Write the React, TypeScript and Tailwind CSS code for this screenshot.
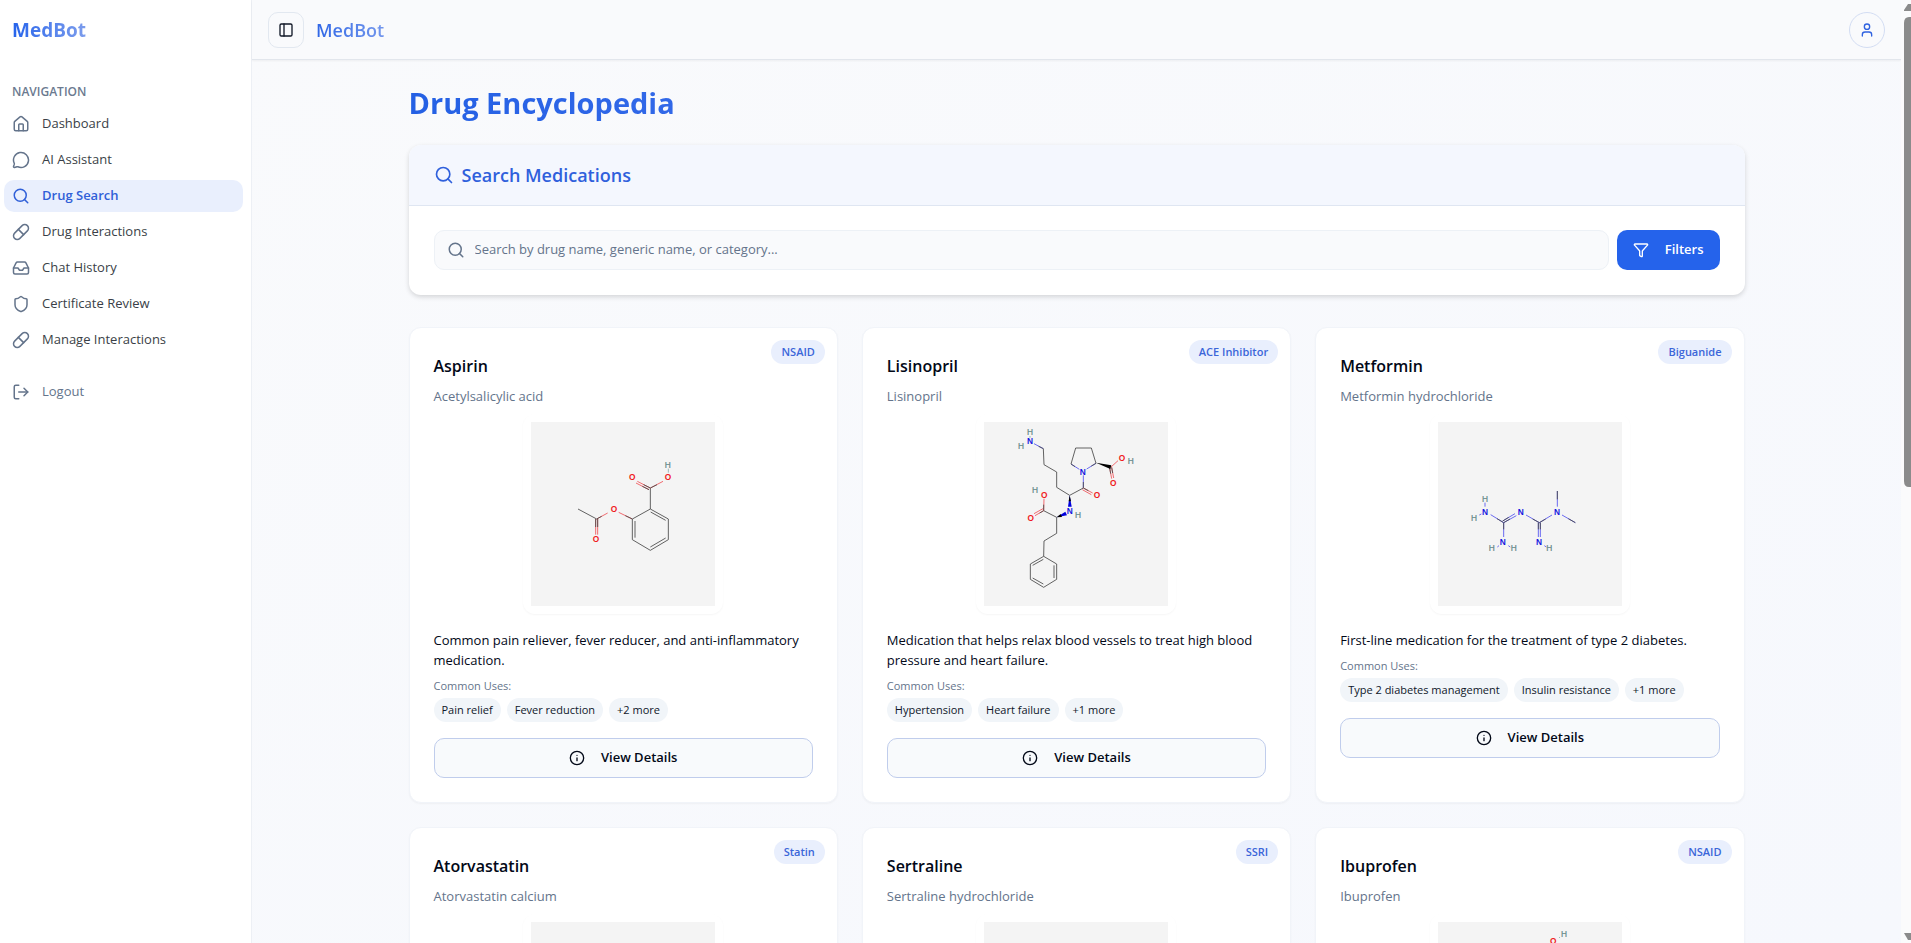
import {
  House, MessageCircle, Search, Pill, Inbox, Shield, LogOut, PanelLeft, User, Funnel, Info,
} from "lucide-react";
import type { LucideIcon } from "lucide-react";

type Atom = [x: number, y: number, symbol: "O" | "N" | "H"];
type Bond = [x1: number, y1: number, x2: number, y2: number, color?: string];

interface Molecule {
  bonds: Bond[];
  wedges?: [points: string, color: string][];
  atoms: Atom[];
}

interface Drug {
  name: string;
  generic: string;
  category: string;
  molecule: Molecule;
  description?: string;
  uses?: string[];
}

const RED = "#f0555a";
const BLUE = "#5555f0";
const TEAL = "#8fb0b0";

/* Coordinates are in thirds of a pixel on a 552 x 552 canvas. */
const aspirin: Molecule = {
  bonds: [
    [141, 261, 197, 291],
    [197, 291, 230, 273, RED], [197, 291, 212, 283],
    [194, 291, 194, 338, RED], [200, 291, 200, 338, RED], [194, 291, 194, 315], [200, 291, 200, 315],
    [263, 271, 304, 291, RED], [283, 281, 304, 291],
    [304, 291, 304, 353], [312, 297, 312, 347],
    [304, 353, 358, 385], [358, 385, 412, 353], [358, 375, 404, 348],
    [412, 353, 412, 291], [412, 291, 358, 261], [404, 295, 359, 270], [358, 261, 304, 291],
    [358, 261, 358, 198],
    [358, 198, 319, 178, RED], [354, 203, 315, 183, RED], [358, 198, 338, 188], [354, 203, 334, 193],
    [358, 198, 396, 178, RED], [358, 198, 378, 188],
    [412, 140, 412, 152, TEAL],
  ],
  atoms: [[410, 130, "H"], [304, 166, "O"], [411, 166, "O"], [249, 260, "O"], [195, 352, "O"]],
};

const lisinopril: Molecule = {
  bonds: [
    [150, 65, 178, 80, BLUE], [164, 73, 178, 80], [178, 80, 180, 128], [180, 128, 218, 150],
    [218, 150, 218, 196], [218, 196, 257, 220], [257, 220, 298, 198],
    [298, 198, 298, 160, BLUE], [298, 198, 298, 180],
    [298, 198, 326, 213, RED], [295, 203, 322, 218, RED], [298, 198, 313, 206],
    [286, 142, 261, 126, BLUE], [273, 134, 261, 126],
    [261, 126, 275, 78], [275, 78, 322, 78], [322, 78, 336, 124],
    [336, 124, 308, 141, BLUE], [336, 124, 322, 132],
    [380, 136, 402, 116, RED], [377, 138, 383, 170, RED], [383, 136, 389, 168, RED], [377, 138, 380, 155], [383, 136, 386, 153],
    [218, 286, 179, 266], [179, 266, 180, 230, RED], [179, 266, 179, 248],
    [179, 266, 153, 281, RED], [177, 260, 150, 275, RED], [179, 266, 167, 273],
    [218, 286, 218, 334], [218, 334, 180, 357], [180, 357, 179, 403],
    [179, 403, 218, 426], [218, 426, 218, 472], [210, 430, 210, 468],
    [218, 472, 179, 496], [179, 496, 139, 472], [178, 486, 146, 468],
    [139, 472, 139, 426], [139, 426, 179, 403], [146, 430, 178, 412],
    [138, 42, 138, 47, TEAL],
  ],
  wedges: [
    ["336,122 382,130 379,141", "#000000"],
    ["257,220 263,254 252,254", "#0000dd"],
    ["257,220 261,238 254,238", "#000000"],
    ["218,286 249,280 244,269", "#0000dd"],
    ["218,286 234,285 230,276", "#000000"],
  ],
  atoms: [
    [138, 29, "H"], [111, 72, "H"], [138, 58, "N"], [296, 150, "N"], [414, 107, "O"], [440, 116, "H"],
    [388, 183, "O"], [339, 220, "O"], [153, 205, "H"], [181, 220, "O"], [140, 288, "O"], [257, 266, "N"], [282, 279, "H"],
  ],
};

const metformin: Molecule = {
  bonds: [
    [141, 242, 141, 254, BLUE], [124, 279, 130, 276, BLUE],
    [158, 278, 197, 302, BLUE], [177, 290, 197, 302],
    [197, 302, 235, 281, BLUE], [194, 297, 231, 275, BLUE], [197, 302, 216, 291], [194, 297, 212, 286],
    [197, 302, 197, 345, BLUE], [197, 302, 197, 322],
    [264, 279, 304, 302, BLUE], [284, 291, 304, 302],
    [301, 302, 301, 345, BLUE], [307, 302, 307, 345, BLUE], [301, 302, 301, 322], [307, 302, 307, 322],
    [304, 302, 342, 279, BLUE], [304, 302, 323, 291],
    [358, 207, 358, 254, BLUE], [358, 207, 358, 232],
    [372, 279, 412, 302, BLUE], [391, 290, 412, 302],
    [178, 375, 183, 371, BLUE], [211, 371, 217, 375, BLUE], [319, 371, 325, 375, BLUE],
  ],
  atoms: [
    [141, 230, "H"], [108, 288, "H"], [141, 269, "N"], [248, 269, "N"], [357, 269, "N"],
    [194, 361, "N"], [161, 379, "H"], [227, 379, "H"], [303, 361, "N"], [334, 379, "H"],
  ],
};

const ibuprofen: Molecule = {
  bonds: [[363, 48, 366, 45, TEAL]],
  atoms: [[346, 58, "O"], [378, 35, "H"]],
};

const blank: Molecule = { bonds: [], atoms: [] };

const drugs: Drug[] = [
  {
    name: "Aspirin", generic: "Acetylsalicylic acid", category: "NSAID",
    description: "Common pain reliever, fever reducer, and anti-inflammatory medication.",
    uses: ["Pain relief", "Fever reduction", "+2 more"], molecule: aspirin,
  },
  {
    name: "Lisinopril", generic: "Lisinopril", category: "ACE Inhibitor",
    description: "Medication that helps relax blood vessels to treat high blood pressure and heart failure.",
    uses: ["Hypertension", "Heart failure", "+1 more"], molecule: lisinopril,
  },
  {
    name: "Metformin", generic: "Metformin hydrochloride", category: "Biguanide",
    description: "First-line medication for the treatment of type 2 diabetes.",
    uses: ["Type 2 diabetes management", "Insulin resistance", "+1 more"], molecule: metformin,
  },
  { name: "Atorvastatin", generic: "Atorvastatin calcium", category: "Statin", molecule: blank },
  { name: "Sertraline", generic: "Sertraline hydrochloride", category: "SSRI", molecule: blank },
  { name: "Ibuprofen", generic: "Ibuprofen", category: "NSAID", molecule: ibuprofen },
];

const navigation: { label: string; icon: LucideIcon; active?: boolean }[] = [
  { label: "Dashboard", icon: House },
  { label: "AI Assistant", icon: MessageCircle },
  { label: "Drug Search", icon: Search, active: true },
  { label: "Drug Interactions", icon: Pill },
  { label: "Chat History", icon: Inbox },
  { label: "Certificate Review", icon: Shield },
  { label: "Manage Interactions", icon: Pill },
];

const atomColor = { O: "#f01820", N: "#1414e0", H: "#5f8585" };

function Structure({ molecule, name }: { molecule: Molecule; name: string }) {
  return (
    <div className="mx-auto mt-2 size-[200px] rounded-xl bg-white p-2 shadow-[0_1px_2px_rgba(0,0,0,0.04)]">
      <svg viewBox="0 0 552 552" role="img" aria-label={`${name} structure`} className="size-full bg-[#f4f4f4]">
        {molecule.bonds.map(([x1, y1, x2, y2, color], i) => (
          <line key={i} x1={x1} y1={y1} x2={x2} y2={y2} stroke={color ?? "#4a4a4a"} strokeWidth="2.6" />
        ))}
        {molecule.wedges?.map(([points, color], i) => <polygon key={i} points={points} fill={color} />)}
        {molecule.atoms.map(([x, y, symbol], i) => (
          <text
            key={i} x={x} y={y + 9} textAnchor="middle" fontSize="25"
            fontWeight={symbol === "H" ? 400 : 700} fill={atomColor[symbol]}
            stroke={symbol === "H" ? "#5f8585" : "none"} strokeWidth="0.6"
            fontFamily="Liberation Sans, sans-serif"
          >
            {symbol}
          </text>
        ))}
      </svg>
    </div>
  );
}

function DrugCard({ drug }: { drug: Drug }) {
  return (
    <article className="relative rounded-xl border border-[#f1f4f9] bg-white p-6 shadow-[0_1px_2px_rgba(0,0,0,0.04)]">
      <span className="absolute top-3 right-3 flex h-6 items-center rounded-full bg-[#e9effd] px-[10px] text-[11px] font-semibold text-[#3b66d9]">
        {drug.category}
      </span>
      <h3 className="text-base leading-7 font-semibold text-[#020817]">{drug.name}</h3>
      <p className="mt-[6px] text-[13px] leading-5 text-[#64748b]">{drug.generic}</p>
      <Structure molecule={drug.molecule} name={drug.name} />
      {drug.description && (
        <p className="mt-4 text-[13px] leading-5 text-[#020817]">{drug.description}</p>
      )}
      {drug.uses && (
        <>
          <p className="mt-2 text-[11px] leading-4 text-[#64748b]">Common Uses:</p>
          <ul className="mt-1 flex flex-wrap gap-[6px]">
            {drug.uses.map((use) => (
              <li key={use} className="flex h-6 items-center rounded-full bg-[#f1f5f9] px-2 text-[11px] text-[#0f172a]">{use}</li>
            ))}
          </ul>
          <button type="button" className="mt-4 flex h-10 w-full items-center justify-center gap-4 rounded-[10px] border border-[#c0cdec] bg-[#f8fafc] text-[13px] font-semibold text-[#020817]">
            <Info className="size-4" />
            View Details
          </button>
        </>
      )}
    </article>
  );
}

function Sidebar() {
  return (
    <aside className="flex w-[252px] shrink-0 flex-col border-r border-[#edf0f5] bg-white pr-2 pl-1">
      <div className="px-2 pt-4">
        <span className="bg-linear-to-r from-[#2563eb] to-[#7c9cec] bg-clip-text text-[19px] leading-7 font-bold text-transparent">MedBot</span>
      </div>
      <h2 className="mt-10 px-2 text-xs leading-4 font-semibold text-[#6b7a90]">NAVIGATION</h2>
      <nav className="mt-2 flex flex-col gap-1">
        {navigation.map(({ label, icon: Icon, active }) => (
          <a
            key={label} href="#"
            className={
              active
                ? "flex h-8 items-center gap-3 rounded-[10px] bg-[#e9effd] px-2 text-[13px] font-semibold text-[#3060d8]"
                : "flex h-8 items-center gap-3 rounded-[10px] px-2 text-[13px] text-[#3a3f47]"
            }
          >
            <Icon className={active ? "size-[18px] text-[#3060d8]" : "size-[18px] text-[#64748b]"} />
            {label}
          </a>
        ))}
      </nav>
      <button type="button" className="mt-5 flex h-8 items-center gap-3 px-2 text-[13px] text-[#64748b]">
        <LogOut className="size-[18px]" />
        Logout
      </button>
    </aside>
  );
}

function TopBar() {
  return (
    <header className="flex h-[60px] shrink-0 items-center gap-3 border-b border-[#e2e6ec] bg-[#f9fafc] px-4 shadow-[0_1px_2px_rgba(0,0,0,0.05)]">
      <button type="button" aria-label="Toggle sidebar" className="flex size-9 items-center justify-center rounded-[10px] border border-[#e2e8f0] bg-[#f9fafc] text-[#111827]">
        <PanelLeft className="size-4" />
      </button>
      <span className="bg-linear-to-r from-[#2f66e6] to-[#7396ec] bg-clip-text text-lg leading-7 font-semibold text-transparent">MedBot</span>
      <button type="button" aria-label="Account" className="ml-auto flex size-9 items-center justify-center rounded-full border border-[#d3ddf3] bg-[#f9fafc] text-[#2f62e0]">
        <User className="size-4" />
      </button>
    </header>
  );
}

function SearchPanel() {
  return (
    <section className="rounded-xl bg-white shadow-[0_2px_5px_rgba(0,0,0,0.15)]">
      <div className="flex h-[61px] items-center gap-2 rounded-t-xl border-b border-[#dfe6f2] bg-[#f4f7fe] px-[25px] text-[#2f60dc]">
        <Search className="size-5" />
        <h2 className="text-lg leading-7 font-semibold">Search Medications</h2>
      </div>
      <form className="flex gap-2 px-[25px] pt-6 pb-[25px]">
        <div className="flex h-10 flex-1 items-center gap-[10px] rounded-[10px] border border-[#edf1f6] bg-[#f9fafc] px-3 text-[#64748b]">
          <Search className="size-[18px]" />
          <input
            type="text"
            aria-label="Search by drug name, generic name, or category"
            placeholder="Search by drug name, generic name, or category..."
            className="min-w-0 flex-1 bg-transparent text-[13px] outline-none placeholder:text-[#64748b]"
          />
        </div>
        <button type="button" className="flex h-10 items-center gap-4 rounded-[10px] bg-[#2563eb] px-4 text-[13px] font-semibold text-white">
          <Funnel className="size-4" />
          Filters
        </button>
      </form>
    </section>
  );
}

export default function App() {
  return (
    <div className="flex h-screen bg-white font-['Open_Sans','Noto_Sans',sans-serif]">
      <Sidebar />
      <div className="flex min-w-0 flex-1 flex-col bg-linear-to-br from-[#f9fafc] to-[#f6f8fd]">
        <TopBar />
        <div className="min-h-0 flex-1 overflow-y-auto [scrollbar-width:none]">
          <main className="mx-auto w-full max-w-[1400px] px-8 pt-[23px] pb-8">
            <h1 className="mb-[22px] w-fit bg-linear-to-r from-[#2460e4] to-[#3168e8] bg-clip-text text-[29px] leading-10 font-bold text-transparent">
              Drug Encyclopedia
            </h1>
            <SearchPanel />
            <div className="mt-8 grid grid-cols-3 gap-6">
              {drugs.map((drug) => <DrugCard key={drug.name} drug={drug} />)}
            </div>
          </main>
        </div>
      </div>
      <div aria-hidden="true" className="flex w-[10px] shrink-0 flex-col items-end justify-between overflow-hidden bg-[#fbfbfc]">
        <svg viewBox="0 0 7 488" className="h-[488px] w-[7px]">
          <path d="M0 11 V10 L4 4 H7 V11 Z" fill="#8b8b8b" />
          <path d="M7 17 H5 Q0 17 0 23 V481 Q0 487 5 487 H7 Z" fill="#8b8b8b" />
        </svg>
        <svg viewBox="0 0 7 12" className="h-3 w-[7px]">
          <path d="M0 2 H7 V9 H4 Z" fill="#8b8b8b" />
        </svg>
      </div>
    </div>
  );
}
